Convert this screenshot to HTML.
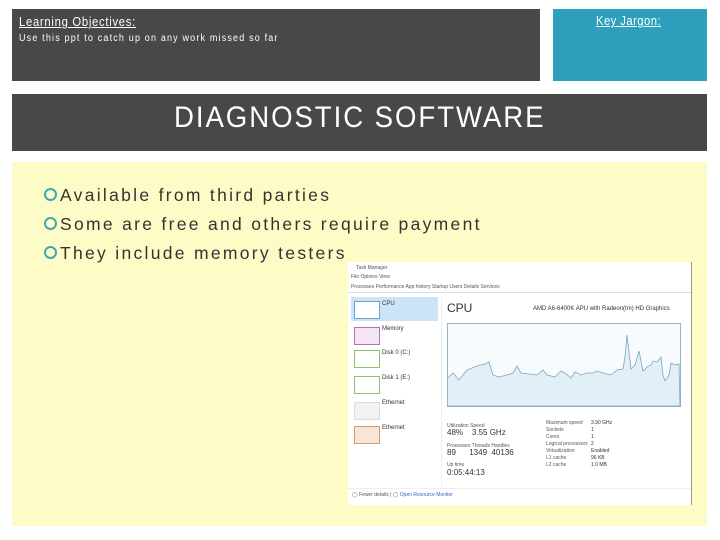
<!DOCTYPE html>
<html><head><style>
body{margin:0;width:720px;height:540px;background:#fff;position:relative;overflow:hidden;font-family:"Liberation Sans",sans-serif}
.a{position:absolute}
.s{font-size:5px;color:#555;position:absolute;white-space:nowrap}
</style></head><body>
<div class="a" style="left:12px;top:9px;width:528px;height:72px;background:#484848"></div>
<div class="a" style="left:19px;top:15px;color:#fff;font-size:12.5px;letter-spacing:.8px;text-decoration:underline;transform:scaleX(.9);transform-origin:left">Learning Objectives:</div>
<div class="a" style="left:19px;top:33px;color:#fff;font-size:10px;letter-spacing:1.3px;transform:scaleX(.9);transform-origin:left">Use this ppt to catch up on any work missed so far</div>
<div class="a" style="left:553px;top:9px;width:154px;height:72px;background:#2ca0bd"></div>
<div class="a" style="left:596px;top:14px;color:#fff;font-size:12.5px;letter-spacing:.5px;text-decoration:underline;transform:scaleX(.9);transform-origin:left">Key Jargon:</div>
<div class="a" style="left:12px;top:94px;width:695px;height:57px;background:#484848"></div>
<div class="a" style="left:174px;top:101px;color:#fff;font-size:30px;letter-spacing:2.1px;transform:scaleX(.92);transform-origin:left">DIAGNOSTIC SOFTWARE</div>
<div class="a" style="left:12px;top:162px;width:695px;height:364px;background:#fefcc6"></div>
<div class="a" style="left:44px;top:181px;font-size:17.5px;letter-spacing:2.3px;color:#333;line-height:29px">
<div><span style="display:inline-block;width:9px;height:9px;border:2px solid #3aa8b8;border-radius:50%;margin-right:3px"></span>Available from third parties</div>
<div><span style="display:inline-block;width:9px;height:9px;border:2px solid #3aa8b8;border-radius:50%;margin-right:3px"></span>Some are free and others require payment</div>
<div><span style="display:inline-block;width:9px;height:9px;border:2px solid #3aa8b8;border-radius:50%;margin-right:3px"></span>They include memory testers</div>
</div>
<div class="a" style="left:348px;top:262px;width:343px;height:243px;background:#fff;border-right:1px solid #999">
<div class="s" style="left:8px;top:3px">Task Manager</div>
<div class="s" style="left:3px;top:12px">File  Options  View</div>
<div class="s" style="left:3px;top:22px">Processes  Performance  App history  Startup  Users  Details  Services</div>
<div class="a" style="left:0;top:30px;width:343px;height:1px;background:#ddd"></div>
<div class="a" style="left:3px;top:35px;width:87px;height:24px;background:#cce4f7"></div>
<div class="a" style="left:6px;top:39px;width:24px;height:16px;border:1px solid #6ba5cf;background:#fff"></div>
<div class="s" style="left:34px;top:39px;font-size:6px;color:#333">CPU</div>
<div class="a" style="left:6px;top:65px;width:24px;height:16px;border:1px solid #b76fbf;background:#f5e6f6"></div>
<div class="s" style="left:34px;top:64px;font-size:6px;color:#333">Memory</div>
<div class="a" style="left:6px;top:88px;width:24px;height:16px;border:1px solid #8cc26a"></div>
<div class="s" style="left:34px;top:88px;font-size:6px;color:#333">Disk 0 (C:)</div>
<div class="a" style="left:6px;top:114px;width:24px;height:16px;border:1px solid #8cc26a"></div>
<div class="s" style="left:34px;top:113px;font-size:6px;color:#333">Disk 1 (E:)</div>
<div class="a" style="left:6px;top:140px;width:24px;height:16px;border:1px solid #ddd;background:#f2f2f2"></div>
<div class="s" style="left:34px;top:138px;font-size:6px;color:#333">Ethernet</div>
<div class="a" style="left:6px;top:164px;width:24px;height:16px;border:1px solid #d39b6a;background:#f7e6d6"></div>
<div class="s" style="left:34px;top:163px;font-size:6px;color:#333">Ethernet</div>
<div class="a" style="left:93px;top:35px;width:1px;height:190px;background:#eee"></div>
<div class="s" style="left:99px;top:39px;font-size:12px;color:#333">CPU</div>
<div class="s" style="left:185px;top:44px;font-size:6px;color:#333">AMD A6-6400K APU with Radeon(tm) HD Graphics</div>
<svg class="a" style="left:99px;top:61px" width="234" height="84"><rect x=".5" y=".5" width="233" height="83" fill="#f7fbfd" stroke="#8fb4cc"/>
<polyline fill="#e3eff6" stroke="#7ba7c2" stroke-width=".8" points="1,55 6,50 12,57 20,47 30,43 38,41 42,39 46,52 52,54 60,52 66,50 70,43 74,50 82,51 90,52 96,47 100,52 108,54 114,48 118,50 124,55 128,49 134,52 140,50 146,50 150,48 156,50 160,51 164,52 170,47 176,46 178,34 180,12 184,46 188,42 192,28 196,48 200,44 204,42 206,38 210,39 214,34 216,52 218,58 222,52 224,40 228,42 232,41 233,83 1,83"/></svg>
<div class="s" style="left:99px;top:161px">Utilization   Speed</div>
<div class="s" style="left:99px;top:166px;font-size:8px;color:#333">48%&nbsp;&nbsp;&nbsp;&nbsp;3.55 GHz</div>
<div class="s" style="left:99px;top:181px">Processes   Threads   Handles</div>
<div class="s" style="left:99px;top:186px;font-size:8px;color:#333">89&nbsp;&nbsp;&nbsp;&nbsp;&nbsp;&nbsp;1349&nbsp;&nbsp;40136</div>
<div class="s" style="left:99px;top:200px">Up time</div>
<div class="s" style="left:99px;top:206px;font-size:8px;color:#333">0:05:44:13</div>
<div class="s" style="left:198px;top:158px;line-height:7px">Maximum speed<br>Sockets<br>Cores<br>Logical processors<br>Virtualization<br>L1 cache<br>L2 cache</div>
<div class="s" style="left:243px;top:158px;line-height:7px;color:#333">3.90 GHz<br>1<br>1<br>2<br>Enabled<br>96 KB<br>1.0 MB</div>
<div class="a" style="left:0;top:226px;width:343px;height:1px;background:#eee"></div>
<div class="s" style="left:4px;top:230px">◯ Fewer details  |  ◯ <span style="color:#36c">Open Resource Monitor</span></div>
</div>
</body></html>
